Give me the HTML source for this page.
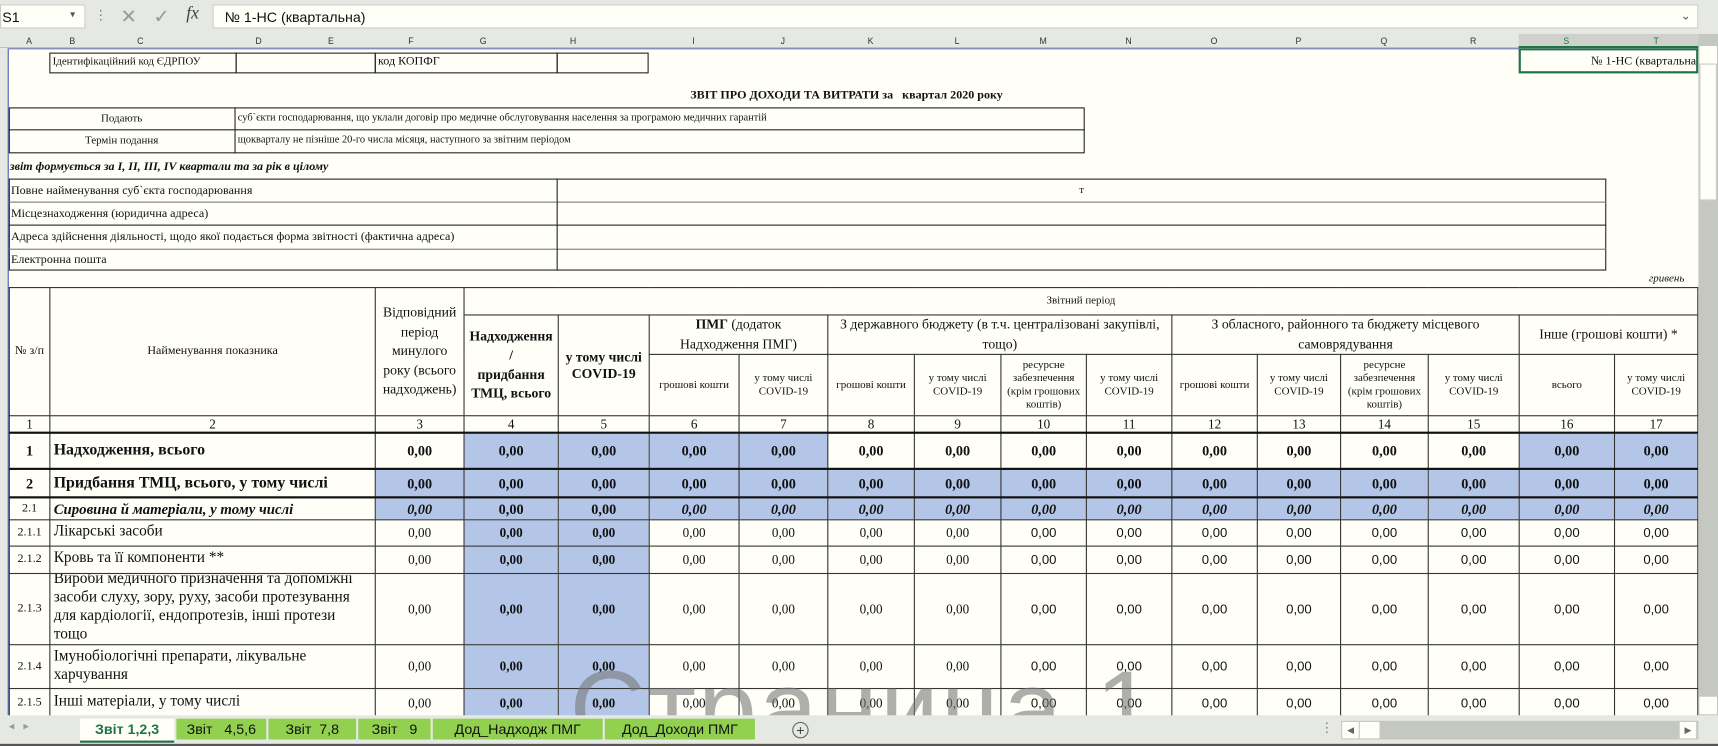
<!DOCTYPE html>
<html><head><meta charset="utf-8"><style>
*{margin:0;padding:0;box-sizing:border-box}
body{width:1718px;height:746px;overflow:hidden;background:#fff}
#w{position:absolute;left:0;top:0;width:1568px;height:681px;transform:scale(1.0957,1.0955);transform-origin:0 0;background:#e6e8e3;font-family:"Liberation Serif",serif;color:#111}
.a{position:absolute}
.s{font-family:"Liberation Sans",sans-serif}
#grid{position:absolute;left:0;top:44px;width:1550px;height:609px;background:#fffff8;overflow:hidden}
.b{position:absolute;border:1px solid #222}
table{border-collapse:collapse;table-layout:fixed;position:absolute;left:8px;top:218px}
td{border:1px solid #333;text-align:center;vertical-align:middle;font-size:10px;line-height:1.2;overflow:hidden;padding:0 1px}
.bl{background:#b4c6e7}
.n td{font-size:12px}
.bb td{font-weight:bold;font-size:13px}
.it td{font-style:italic;font-weight:bold}
.L{text-align:left!important;padding-left:3px}
.ch{position:absolute;top:0;height:13px;font:8px "Liberation Sans",sans-serif;color:#333;text-align:center;line-height:13px}
</style></head><body><div id="w">
<div class="a" style="left:0;top:4px;width:78px;height:22px;background:#fffff8;border:1px solid #ccc"></div>
<div class="a s" style="left:2px;top:8px;font-size:13px">S1</div>
<div class="a s" style="left:64px;top:8px;font-size:9px;color:#555">▾</div>
<div class="a s" style="left:86px;top:7px;font-size:12px;color:#777">⋮</div>
<div class="a s" style="left:110px;top:5px;font-size:18px;color:#999">✕</div>
<div class="a s" style="left:140px;top:5px;font-size:18px;color:#999">✓</div>
<div class="a" style="left:170px;top:4px;font-size:16px;font-style:italic;color:#444">fx</div>
<div class="a" style="left:194px;top:4px;width:1356px;height:22px;background:#fffff8;border:1px solid #ccc"></div>
<div class="a s" style="left:205px;top:8px;font-size:13px">№ 1-НС (квартальна)</div>
<div class="a s" style="left:1534px;top:8px;font-size:11px;color:#555">⌄</div>
<div class="a" style="left:0;top:31px;width:1550px;height:13px;background:#e6e8e3;border-bottom:1px solid #bbb"></div>
<div class="a" style="left:1386px;top:31px;width:164px;height:13px;background:#cfd2cc;border-bottom:2px solid #217346"></div>
<div class="ch" style="left:8px;top:31px;width:37px">A</div>
<div class="ch" style="left:45px;top:31px;width:42px">B</div>
<div class="ch" style="left:87px;top:31px;width:82px">C</div>
<div class="ch" style="left:215px;top:31px;width:42px">D</div>
<div class="ch" style="left:257px;top:31px;width:90px">E</div>
<div class="ch" style="left:342px;top:31px;width:66px">F</div>
<div class="ch" style="left:408px;top:31px;width:66px">G</div>
<div class="ch" style="left:474px;top:31px;width:98px">H</div>
<div class="ch" style="left:592px;top:31px;width:82px">I</div>
<div class="ch" style="left:674px;top:31px;width:81px">J</div>
<div class="ch" style="left:755px;top:31px;width:79px">K</div>
<div class="ch" style="left:834px;top:31px;width:79px">L</div>
<div class="ch" style="left:913px;top:31px;width:78px">M</div>
<div class="ch" style="left:991px;top:31px;width:78px">N</div>
<div class="ch" style="left:1069px;top:31px;width:78px">O</div>
<div class="ch" style="left:1147px;top:31px;width:76px">P</div>
<div class="ch" style="left:1223px;top:31px;width:80px">Q</div>
<div class="ch" style="left:1303px;top:31px;width:83px">R</div>
<div class="ch" style="left:1386px;top:31px;width:87px;color:#217346">S</div>
<div class="ch" style="left:1473px;top:31px;width:77px;color:#217346">T</div>
<div class="a" style="left:1550px;top:31px;width:18px;height:622px;background:#c5c8c0"></div>
<div class="a" style="left:1551px;top:42px;width:16px;height:16px;background:#fffff8"></div>
<div class="a" style="left:1551px;top:58px;width:16px;height:125px;background:#fffff8;border:1px solid #ccc"></div>
<div class="a" style="left:1551px;top:636px;width:16px;height:16px;background:#fffff8"></div>
<div id="grid">
<div class="a" style="left:0;top:0;width:8px;height:609px;background:#e6e8e3;border-right:1px solid #4b5fb0"></div>
<div class="a" style="left:8px;top:0;width:1542px;height:1px;background:#4b5fb0"></div>
<div class="b" style="left:45px;top:4px;width:171px;height:19px"></div>
<div class="a" style="left:48px;top:7px;font-size:10px">Ідентифікаційний код ЄДРПОУ</div>
<div class="b" style="left:215px;top:4px;width:128px;height:19px"></div>
<div class="b" style="left:342px;top:4px;width:167px;height:19px"></div>
<div class="a" style="left:345px;top:6px;font-size:11px">код КОПФГ</div>
<div class="b" style="left:508px;top:4px;width:84px;height:19px"></div>
<div class="a" style="left:1386px;top:0;width:164px;height:23px;border:2px solid #217346"></div>
<div class="a" style="left:1390px;top:6px;width:158px;text-align:right;font-size:11px;white-space:nowrap;overflow:hidden">№ 1-НС (квартальна</div>
<div class="a" style="left:630px;top:37px;font-size:11px;font-weight:bold">ЗВІТ ПРО ДОХОДИ ТА ВИТРАТИ за &nbsp; квартал 2020 року</div>
<div class="b" style="left:8px;top:54px;width:982px;height:42px"></div>
<div class="a" style="left:8px;top:74px;width:982px;height:1px;background:#222"></div>
<div class="a" style="left:214px;top:54px;width:1px;height:42px;background:#222"></div>
<div class="a" style="left:8px;top:59px;width:206px;text-align:center;font-size:10px">Подають</div>
<div class="a" style="left:8px;top:79px;width:206px;text-align:center;font-size:10px">Термін подання</div>
<div class="a" style="left:217px;top:59px;font-size:9.5px">суб`єкти господарювання, що уклали договір про медичне обслуговування населення за програмою медичних гарантій</div>
<div class="a" style="left:217px;top:79px;font-size:9.5px">щокварталу не пізніше 20-го числа місяця, наступного за звітним періодом</div>
<div class="a" style="left:9px;top:102px;font-size:11px;font-weight:bold;font-style:italic">звіт формується за I, II, III, IV квартали та за рік в цілому</div>
<div class="b" style="left:8px;top:119px;width:1458px;height:84px"></div>
<div class="a" style="left:8px;top:140px;width:1458px;height:1px;background:#777"></div>
<div class="a" style="left:8px;top:161px;width:1458px;height:1px;background:#222"></div>
<div class="a" style="left:8px;top:183px;width:1458px;height:1px;background:#777"></div>
<div class="a" style="left:508px;top:119px;width:1px;height:84px;background:#222"></div>
<div class="a" style="left:10px;top:124px;font-size:11px">Повне найменування суб`єкта господарювання</div>
<div class="a" style="left:10px;top:145px;font-size:11px">Місцезнаходження (юридична адреса)</div>
<div class="a" style="left:10px;top:166px;font-size:11px">Адреса здійснення діяльності, щодо якої подається форма звітності (фактична адреса)</div>
<div class="a" style="left:10px;top:187px;font-size:11px">Електронна пошта</div>
<div class="a" style="left:985px;top:124px;font-size:10px">т</div>
<div class="a" style="left:1505px;top:205px;font-size:10px;font-style:italic">гривень</div>
<table>
<colgroup><col style="width:37px"><col style="width:297px"><col style="width:81px"><col style="width:86px"><col style="width:83px"><col style="width:82px"><col style="width:81px"><col style="width:79px"><col style="width:79px"><col style="width:78px"><col style="width:78px"><col style="width:78px"><col style="width:76px"><col style="width:80px"><col style="width:83px"><col style="width:87px"><col style="width:76px"></colgroup>
<tr style="height:25px"><td rowspan="3" style="font-size:11px">№ з/п</td><td rowspan="3" style="font-size:11px">Найменування показника</td><td rowspan="3" style="font-size:12.5px;line-height:1.4">Відповідний період минулого року (всього надходжень)</td><td colspan="14">Звітний період</td></tr>
<tr style="height:34px"><td rowspan="2" style="font-weight:bold;font-size:12.5px;line-height:1.4">Надходження<br>/<br>придбання ТМЦ, всього</td><td rowspan="2" style="font-weight:bold;font-size:12.5px">у тому числі COVID-19</td><td colspan="2" style="font-size:12.5px;line-height:1.4"><b>ПМГ</b> (додаток<br>Надходження ПМГ)</td><td colspan="4" style="font-size:12.5px;line-height:1.4">З державного бюджету (в т.ч. централізовані закупівлі, тощо)</td><td colspan="4" style="font-size:12.5px;line-height:1.4">З обласного, районного та бюджету місцевого самоврядування</td><td colspan="2" style="font-size:12.5px">Інше (грошові кошти) *</td></tr>
<tr style="height:56px"><td>грошові кошти</td><td>у тому числі COVID-19</td><td>грошові кошти</td><td>у тому числі COVID-19</td><td>ресурсне забезпечення (крім грошових коштів)</td><td>у тому числі COVID-19</td><td>грошові кошти</td><td>у тому числі COVID-19</td><td>ресурсне забезпечення (крім грошових коштів)</td><td>у тому числі COVID-19</td><td>всього</td><td>у тому числі COVID-19</td></tr>
<tr class="n" style="height:15px;border-bottom:2px solid #111"><td>1</td><td>2</td><td>3</td><td>4</td><td>5</td><td>6</td><td>7</td><td>8</td><td>9</td><td>10</td><td>11</td><td>12</td><td>13</td><td>14</td><td>15</td><td>16</td><td>17</td></tr>
<tr class="bb" style="height:33px;border-bottom:2px solid #111"><td>1</td><td class="L" style="font-size:14.5px">Надходження, всього</td><td>0,00</td><td class="bl">0,00</td><td class="bl">0,00</td><td class="bl">0,00</td><td class="bl">0,00</td><td>0,00</td><td>0,00</td><td>0,00</td><td>0,00</td><td>0,00</td><td>0,00</td><td>0,00</td><td>0,00</td><td class="bl">0,00</td><td class="bl">0,00</td></tr>
<tr class="bb" style="height:26px;border-bottom:2px solid #111"><td>2</td><td class="L" style="font-size:14.5px">Придбання ТМЦ, всього, у тому числі</td><td class="bl">0,00</td><td class="bl">0,00</td><td class="bl">0,00</td><td class="bl">0,00</td><td class="bl">0,00</td><td class="bl">0,00</td><td class="bl">0,00</td><td class="bl">0,00</td><td class="bl">0,00</td><td class="bl">0,00</td><td class="bl">0,00</td><td class="bl">0,00</td><td class="bl">0,00</td><td class="bl">0,00</td><td class="bl">0,00</td></tr>
<tr class="bb it" style="height:20px"><td style="font-style:normal;font-weight:normal;font-size:11px">2.1</td><td class="L" style="font-size:13.5px">Сировина й матеріали, у тому числі</td><td class="bl">0,00</td><td class="bl" style="font-style:normal">0,00</td><td class="bl" style="font-style:normal">0,00</td><td class="bl">0,00</td><td class="bl">0,00</td><td class="bl">0,00</td><td class="bl">0,00</td><td class="bl">0,00</td><td class="bl">0,00</td><td class="bl">0,00</td><td class="bl">0,00</td><td class="bl">0,00</td><td class="bl">0,00</td><td class="bl">0,00</td><td class="bl">0,00</td></tr>
<tr class="n" style="height:24px"><td style="font-size:11px">2.1.1</td><td class="L" style="font-size:14px">Лікарські засоби</td><td>0,00</td><td class="bl"><b>0,00</b></td><td class="bl"><b>0,00</b></td><td>0,00</td><td>0,00</td><td>0,00</td><td>0,00</td><td class="s">0,00</td><td class="s">0,00</td><td class="s">0,00</td><td class="s">0,00</td><td class="s">0,00</td><td class="s">0,00</td><td class="s">0,00</td><td class="s">0,00</td></tr>
<tr class="n" style="height:25px"><td style="font-size:11px">2.1.2</td><td class="L" style="font-size:14px">Кровь та її компоненти **</td><td>0,00</td><td class="bl"><b>0,00</b></td><td class="bl"><b>0,00</b></td><td>0,00</td><td>0,00</td><td>0,00</td><td>0,00</td><td class="s">0,00</td><td class="s">0,00</td><td class="s">0,00</td><td class="s">0,00</td><td class="s">0,00</td><td class="s">0,00</td><td class="s">0,00</td><td class="s">0,00</td></tr>
<tr class="n" style="height:65px"><td style="font-size:11px">2.1.3</td><td class="L" style="font-size:14px;line-height:17px;vertical-align:top;padding-right:8px"><div style="height:64px;overflow:hidden;margin-top:-4px">Вироби медичного призначення та допоміжні засоби слуху, зору, руху, засоби протезування для кардіології, ендопротезів, інші протези тощо</div></td><td>0,00</td><td class="bl"><b>0,00</b></td><td class="bl"><b>0,00</b></td><td>0,00</td><td>0,00</td><td>0,00</td><td>0,00</td><td class="s">0,00</td><td class="s">0,00</td><td class="s">0,00</td><td class="s">0,00</td><td class="s">0,00</td><td class="s">0,00</td><td class="s">0,00</td><td class="s">0,00</td></tr>
<tr class="n" style="height:40px"><td style="font-size:11px">2.1.4</td><td class="L" style="font-size:14px;line-height:17px;padding-right:40px">Імунобіологічні препарати, лікувальне харчування</td><td>0,00</td><td class="bl"><b>0,00</b></td><td class="bl"><b>0,00</b></td><td>0,00</td><td>0,00</td><td>0,00</td><td>0,00</td><td class="s">0,00</td><td class="s">0,00</td><td class="s">0,00</td><td class="s">0,00</td><td class="s">0,00</td><td class="s">0,00</td><td class="s">0,00</td><td class="s">0,00</td></tr>
<tr class="n" style="height:27px"><td style="font-size:11px">2.1.5</td><td class="L" style="font-size:14px">Інші матеріали, у тому числі</td><td>0,00</td><td class="bl"><b>0,00</b></td><td class="bl"><b>0,00</b></td><td>0,00</td><td>0,00</td><td>0,00</td><td>0,00</td><td class="s">0,00</td><td class="s">0,00</td><td class="s">0,00</td><td class="s">0,00</td><td class="s">0,00</td><td class="s">0,00</td><td class="s">0,00</td><td class="s">0,00</td></tr>
<tr class="n" style="height:30px"><td></td><td></td><td></td><td class="bl"></td><td class="bl"></td><td></td><td></td><td></td><td></td><td></td><td></td><td></td><td></td><td></td><td></td><td></td><td></td></tr>
</table>
<div class="a s" style="left:520px;top:548px;font-size:96px;color:rgba(120,120,120,0.6);white-space:nowrap;letter-spacing:2px">Страница 1</div>
</div>
<div class="a" style="left:0;top:653px;width:1568px;height:28px;background:#e6e8e3;border-bottom:2px solid #555"></div>
<div class="a s" style="left:8px;top:658px;font-size:10px;color:#999">◂ &nbsp; ▸</div>
<div class="a s" style="left:73px;top:656px;width:86px;height:22px;background:#fffff8;border-bottom:2px solid #217346;text-align:center;font-size:13px;font-weight:bold;color:#217346;line-height:20px">Звіт 1,2,3</div>
<div class="a s" style="left:161px;top:656px;width:82px;height:19px;background:#92d050;text-align:center;font-size:13px;line-height:19px">Звіт &nbsp; 4,5,6</div>
<div class="a s" style="left:245px;top:656px;width:80px;height:19px;background:#92d050;text-align:center;font-size:13px;line-height:19px">Звіт &nbsp;7,8</div>
<div class="a s" style="left:327px;top:656px;width:66px;height:19px;background:#92d050;text-align:center;font-size:13px;line-height:19px">Звіт &nbsp; 9</div>
<div class="a s" style="left:395px;top:656px;width:155px;height:19px;background:#92d050;text-align:center;font-size:13px;line-height:19px">Дод_Надходж ПМГ</div>
<div class="a s" style="left:552px;top:656px;width:137px;height:19px;background:#92d050;text-align:center;font-size:13px;line-height:19px">Дод_Доходи ПМГ</div>
<div class="a" style="left:723px;top:659px;width:15px;height:15px;border:1px solid #666;border-radius:50%;text-align:center;font:13px/13px 'Liberation Sans';color:#444">+</div>
<div class="a s" style="left:1205px;top:657px;font-size:12px;color:#777">⋮</div>
<div class="a" style="left:1224px;top:658px;width:326px;height:17px;background:#c5c8c0"></div>
<div class="a" style="left:1225px;top:659px;width:15px;height:15px;background:#fffff8;font-size:8px;text-align:center;line-height:15px;color:#666">◀</div>
<div class="a" style="left:1241px;top:659px;width:18px;height:15px;background:#fffff8"></div>
<div class="a" style="left:1533px;top:659px;width:15px;height:15px;background:#fffff8;font-size:8px;text-align:center;line-height:15px;color:#666">▶</div>
</div></body></html>
